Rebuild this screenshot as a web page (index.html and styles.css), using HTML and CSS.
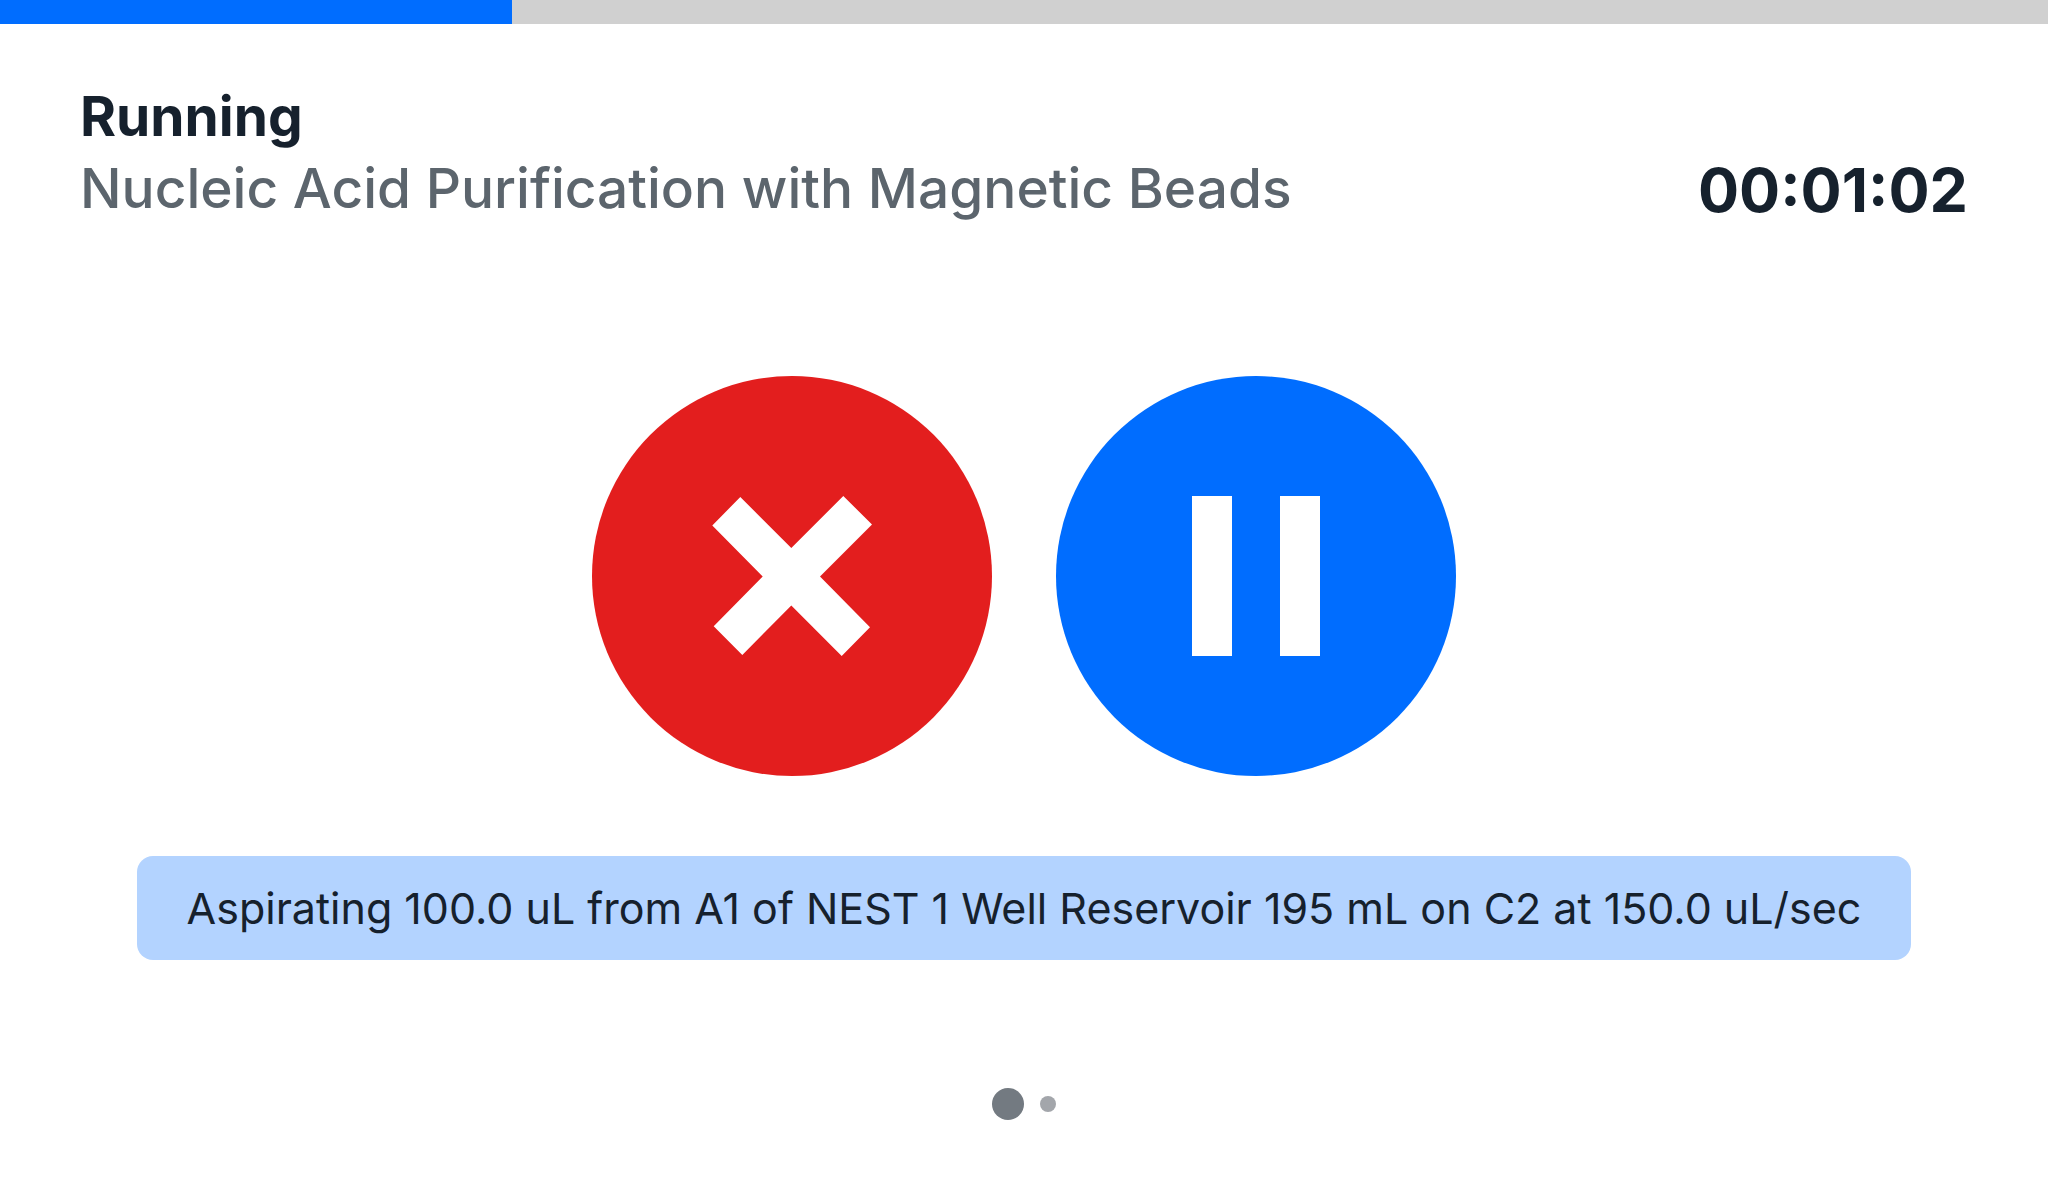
FILE: index.html
```html
<!DOCTYPE html>
<html lang="en">
<head>
  <meta charset="utf-8">
  <meta name="viewport" content="width=device-width, initial-scale=1">
  <title>Running</title>
  <link rel="stylesheet" href="styles.css">
</head>
<body>
  <div class="progress" role="progressbar" aria-label="Run progress" aria-valuemin="0" aria-valuemax="100" aria-valuenow="25">
    <div class="progress-fill" style="width: 25%"></div>
  </div>
  <main class="run">
    <header class="run-header">
      <div class="run-titles">
        <h1 class="run-state">Running</h1>
        <p class="run-name">Nucleic Acid Purification with Magnetic Beads</p>
      </div>
      <time class="run-timer" datetime="PT1M2S">00:01:02</time>
    </header>
    <div class="controls">
      <button class="control control-stop" type="button" aria-label="Cancel run">
        <svg class="control-icon" viewBox="0 0 400 400" aria-hidden="true">
          <path fill="currentColor" d="M148.3 121 199.3 172 251.3 120 280 148.5 228 200.5 278 251.3 249.7 280 199.3 229.5 150.3 279 121.7 250.3 170.7 200.5 120.3 149.5Z"/>
        </svg>
      </button>
      <button class="control control-pause" type="button" aria-label="Pause run">
        <svg class="control-icon" viewBox="0 0 400 400" aria-hidden="true">
          <path fill="currentColor" d="M136 120h40v160h-40zM224 120h40v160h-40z"/>
        </svg>
      </button>
    </div>
    <p class="command">Aspirating 100.0 uL from A1 of NEST 1 Well Reservoir 195 mL on C2 at 150.0 uL/sec</p>
    <div class="pager">
      <span class="dot dot-current"></span>
      <span class="dot"></span>
    </div>
  </main>
</body>
</html>
```
FILE: styles.css
```css
* {
  box-sizing: border-box;
}

body {
  margin: 0;
  background: #fff;
  color: #16212d;
  font-family: Inter, "Liberation Sans", sans-serif;
}

.progress {
  height: 24px;
  background: #d0d0d0;
}

.progress-fill {
  height: 100%;
  background: #006dff;
}

.run {
  display: flex;
  flex-direction: column;
  align-items: center;
  padding: 56px 80px 80px;
}

.run-header {
  align-self: stretch;
  display: flex;
  justify-content: space-between;
  align-items: flex-end;
  gap: 40px;
}

.run-state,
.run-name {
  margin: 0;
  font-size: 55px;
  line-height: 72px;
}

.run-state {
  font-weight: 700;
}

.run-name {
  font-weight: 500;
  color: #5c656d;
}

.run-timer {
  font-size: 61px;
  line-height: 68px;
  font-weight: 700;
}

.controls {
  display: flex;
  gap: 64px;
  margin-top: 152px;
}

.control {
  width: 400px;
  height: 400px;
  padding: 0;
  border: 0;
  border-radius: 50%;
  color: #fff;
  cursor: pointer;
}

.control-stop {
  background: #e31e1e;
}

.control-pause {
  background: #006dff;
}

.control-icon {
  display: block;
  width: 100%;
  height: 100%;
}

.command {
  margin: 80px 0 0;
  padding: 22px 50px;
  border-radius: 16px;
  background: #b3d3ff;
  font-size: 43px;
  line-height: 60px;
}

.pager {
  display: flex;
  align-items: center;
  gap: 16px;
  margin-top: 128px;
}

.dot {
  width: 16px;
  height: 16px;
  border-radius: 50%;
  background: #a3a6ab;
}

.dot-current {
  width: 32px;
  height: 32px;
  background: #737a81;
}
```
